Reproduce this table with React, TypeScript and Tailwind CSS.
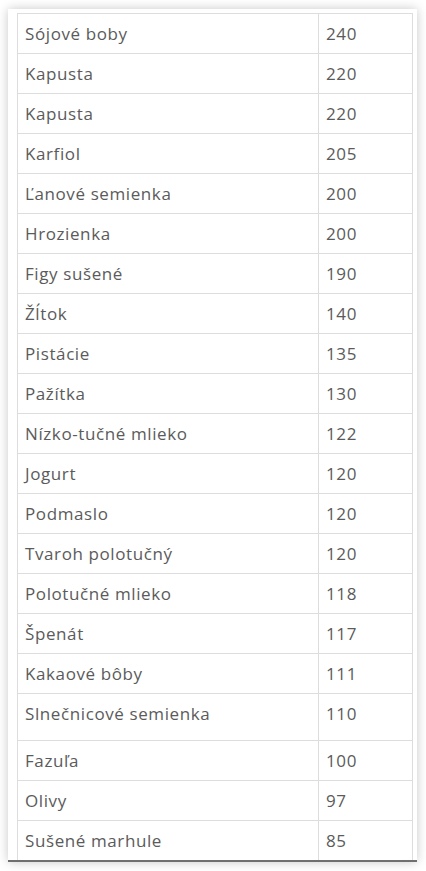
import React from "react";

const rows: [string, string][] = [
  ["Sójové boby", "240"],
  ["Kapusta", "220"],
  ["Kapusta", "220"],
  ["Karfiol", "205"],
  ["Ľanové semienka", "200"],
  ["Hrozienka", "200"],
  ["Figy sušené", "190"],
  ["Žĺtok", "140"],
  ["Pistácie", "135"],
  ["Pažítka", "130"],
  ["Nízko-tučné mlieko", "122"],
  ["Jogurt", "120"],
  ["Podmaslo", "120"],
  ["Tvaroh polotučný", "120"],
  ["Polotučné mlieko", "118"],
  ["Špenát", "117"],
  ["Kakaové bôby", "111"],
  ["Slnečnicové semienka", "110"],
  ["Fazuľa", "100"],
  ["Olivy", "97"],
  ["Sušené marhule", "85"],
];

export default function App() {
  return (
    <div className="w-[426px] h-[871px] bg-white pt-[9px] pl-[8px]">
      <div
        className="w-[409px] h-[853px] bg-white pl-[9px] pr-[4px] pt-[4px] border-b-2 border-[#6f6f6f] shadow-[0_0_10px_rgba(0,0,0,0.22)] overflow-hidden"
        style={{ fontFamily: '"Open Sans", "Noto Sans", sans-serif' }}
      >
        <div className="border-t border-l border-r border-[#dddddd]">
          {rows.map(([name, val], i) => (
            <div
              key={i}
              className={`flex border-b border-[#dddddd] text-[17px] tracking-[0.6px] leading-6 text-[#5b5b5b] ${
                name === "Slnečnicové semienka" ? "h-[47px]" : "h-[40px]"
              }`}
            >
              <div className="w-[301px] border-r border-[#dddddd] pl-[7px] pt-[8px]">
                {name}
              </div>
              <div className="flex-1 pl-[7px] pt-[8px]">{val}</div>
            </div>
          ))}
        </div>
      </div>
    </div>
  );
}
